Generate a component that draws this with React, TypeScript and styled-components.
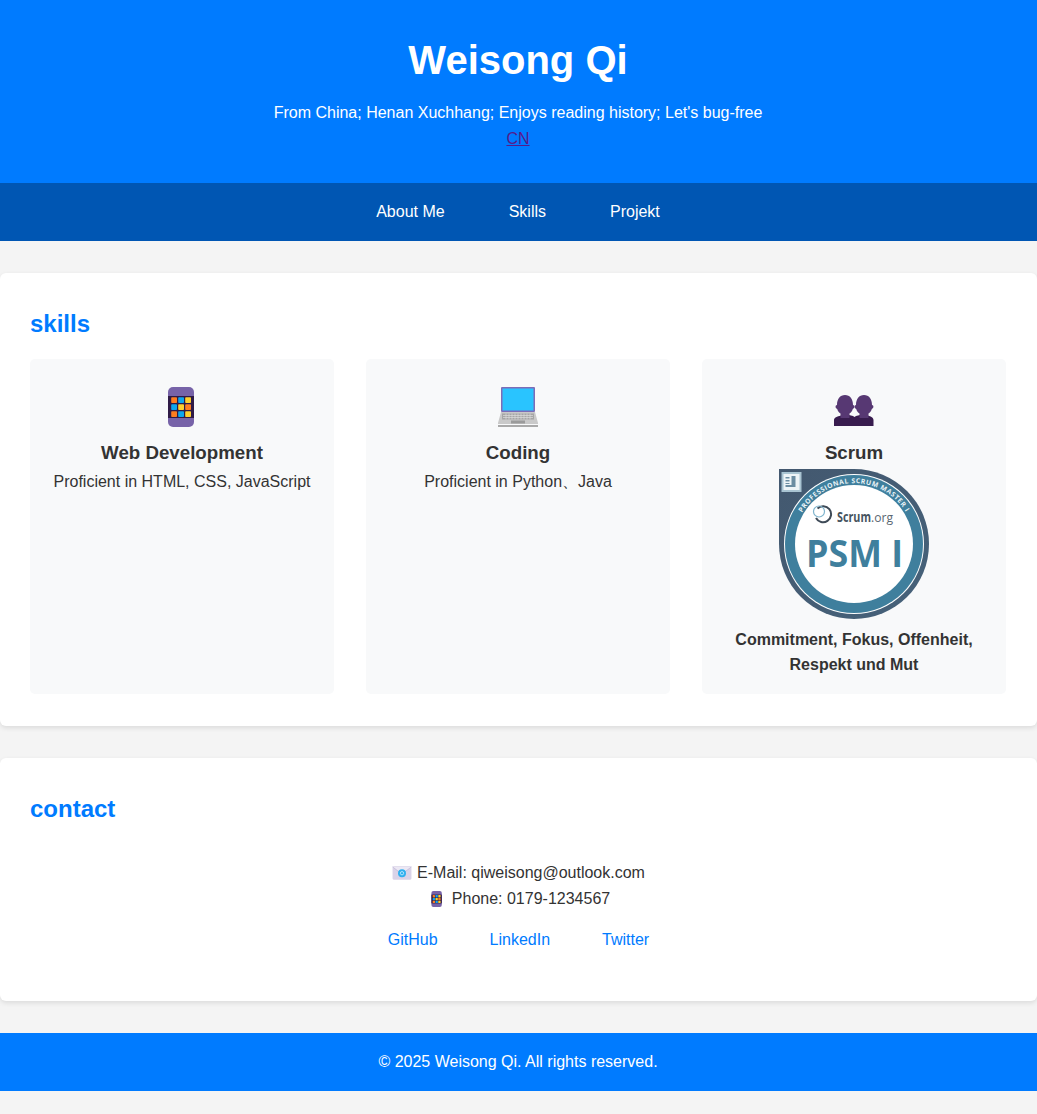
import React from "react";
import styled, { createGlobalStyle } from "styled-components";

const Global = createGlobalStyle`
  html, body { margin: 0; padding: 0; }
  body {
    background: #f4f4f4;
    color: #333;
    font-family: "Liberation Sans", Arial, sans-serif;
    font-size: 16px;
    line-height: 1.6;
  }
  * { box-sizing: border-box; }
`;

const Page = styled.div`
  min-height: 1114px;
`;
const Header = styled.header`
  background: #007bff;
  color: #fff;
  text-align: center;
  padding: 32px 33px 32px 32px;
`;
const Title = styled.h1`
  margin: 4px 0 16px;
  font-size: 40px;
  line-height: 48px;
  font-weight: 700;
`;
const Tagline = styled.p`
  margin: 0;
`;
const LangLink = styled.a`
  color: #551a8b;
  text-decoration: underline;
`;
const Nav = styled.nav`
  background: #0056b3;
  display: flex;
  justify-content: center;
  gap: 64px;
  padding: 16px 17px 16px 16px;
`;
const NavLink = styled.a`
  color: #fff;
  text-decoration: none;
`;
const Section = styled.section`
  background: #fff;
  margin: 32px 0;
  padding: 30px 30px 32px;
  border-radius: 6px;
  box-shadow: 0 2px 5px rgba(0, 0, 0, 0.1);
`;
const Heading = styled.h2`
  margin: 2px 0 16px;
  color: #007bff;
  font-size: 24px;
  line-height: 38px;
  font-weight: 700;
`;
const CardGrid = styled.div`
  display: grid;
  grid-template-columns: repeat(3, 304px);
  gap: 32px;
`;
const Card = styled.article`
  background: #f8f9fa;
  border-radius: 5px;
  padding: 28px 20px 17px;
  text-align: center;
  height: 335px;
  display: flex;
  flex-direction: column;
  align-items: center;
`;
const CardIcon = styled.svg`
  display: block;
  height: 40px;
  width: 40px;
  flex: none;
`;
const CardTitle = styled.h3`
  margin: 10px 0 0;
  font-size: 18.72px;
  line-height: 32px;
  font-weight: 700;
`;
const CardText = styled.p`
  margin: 0;
`;
const Badge = styled.svg`
  display: block;
  width: 150px;
  height: 150px;
  margin: 0 0 8px;
  flex: none;
`;
const Values = styled.p`
  margin: 0;
  font-weight: 700;
  line-height: 25px;
`;
const Contact = styled.div`
  display: flex;
  flex-direction: column;
  align-items: center;
  padding: 16px 0 17px;
`;
const ContactLine = styled.p`
  margin: 0;
  display: flex;
  align-items: center;
  height: 26px;
`;
const InlineIcon = styled.svg`
  width: 20px;
  height: 16px;
  margin-right: 5px;
  flex: none;
`;
const Socials = styled.div`
  display: flex;
  gap: 52px;
  margin-top: 15px;
`;
const SocialLink = styled.a`
  color: #007bff;
  text-decoration: none;
`;
const Footer = styled.footer`
  background: #007bff;
  color: #fff;
  text-align: center;
  padding: 16px 17px 16px 16px;
`;

const PhoneArt = () => (
  <>
    <rect x="6" y="0" width="26" height="40" rx="5" fill="#7763a8" />
    <rect x="6" y="9" width="26" height="22" fill="#2f1b46" />
    {[0, 1, 2].map((r) =>
      [0, 1, 2].map((c) => (
        <rect
          key={`${r}${c}`}
          x={9.2 + c * 7}
          y={10.2 + r * 7}
          width="5.8"
          height="5.8"
          rx="0.8"
          fill={
            [
              ["#ff7d1f", "#0da7ee", "#ffd02c"],
              ["#0da7ee", "#ffd02c", "#ff7d1f"],
              ["#ff7d1f", "#0da7ee", "#ffd02c"],
            ][r][c]
          }
        />
      ))
    )}
  </>
);

const LaptopArt = () => (
  <>
    <rect x="3" y="0" width="34" height="25" rx="1" fill="#7c6cb8" />
    <rect x="4.500" y="1.500" width="31" height="22" fill="#29c4ff" />
    <path d="M3 25h34l3 11v1H0v-1z" fill="#c9c9c9" />
    <rect x="4" y="26.500" width="32" height="6" fill="#a6a6a6" />
    <path
      d="M5 28.500h30M5 30.500h30M8 26.500v6M11 26.500v6M14 26.500v6M17 26.500v6M20 26.500v6M23 26.500v6M26 26.500v6M29 26.500v6M32 26.500v6"
      stroke="#dcdcdc"
      strokeWidth="0.7"
    />
    <rect x="13" y="33.500" width="14" height="3" fill="#9b9b9b" />
    <rect x="0" y="38" width="40" height="2" fill="#a9a9a9" />
  </>
);

const PeopleArt = () => (
  <>
    <path
      d="M0 39V33c0-2.500 3-3.500 7-4.500l4-1.500 8 2 1.500 1 1.500-1 8-2 4 1.500c3 1 5.500 2 5.500 4.500v6z"
      fill="#381c4e"
    />
    <path
      d="M3 18C3 12 6 8 11 8s8 4 8 10c1.800 0 2 3.200-.2 4-.6 2-1.800 3.500-3.300 4.500V31h-9v-4.500C5 25.500 3.800 24 3.200 22 1 21.200 1.200 18 3 18z"
      fill="#573873"
    />
    <path
      d="M22 18c0-6 3-10 8-10s8 4 8 10c1.800 0 2 3.200-.2 4-.6 2-1.800 3.500-3.300 4.500V31h-9v-4.500c-1.500-1-2.700-2.500-3.300-4.500-2.200-.8-2-4-.2-4z"
      fill="#573873"
    />
  </>
);

const EnvelopeArt = () => (
  <>
    <rect x="0.500" y="1" width="17" height="12" rx="1" fill="#d9d3e8" />
    <path d="M0.500 1.500 9 8l8.500-6.500" fill="#ece8f4" stroke="#bcb3d4" strokeWidth="0.6" />
    <circle cx="9" cy="7.200" r="3.600" fill="#2fb0ee" />
    <circle cx="9" cy="7.200" r="1.500" fill="none" stroke="#bfe9ff" strokeWidth="0.8" />
  </>
);

const PsmBadge = () => (
  <Badge viewBox="0 0 150 150" role="img" aria-label="PSM I">
    <defs>
      <linearGradient id="edge" x1="0" y1="0" x2="1" y2="1">
        <stop offset="0" stopColor="#43586f" />
        <stop offset="1" stopColor="#46627a" />
      </linearGradient>
      <path id="arc" d="M 23.100 43.800 A 60.500 60.500 0 0 1 129 47" />
    </defs>
    <path d="M0 0H75A75 75 0 1 1 0 75z" fill="url(#edge)" />
    <circle cx="75" cy="75" r="70" fill="#fff" />
    <circle cx="75" cy="75" r="69" fill="#3f7f9d" />
    <circle cx="75" cy="75" r="59" fill="#fff" />
    <rect x="2.500" y="3" width="20" height="20" fill="#a9c4d2" />
    <rect x="4.500" y="5" width="16" height="16" fill="#eef4f7" />
    <path d="M6.500 8h4v1.500h-4zM6.500 11h4v1.500h-4zM6.500 14h4v1h-4zM6.500 16h8v2h-8zM12.500 7h4v11h-4z" fill="#6c8da2" />
    <text fontFamily="'Open Sans', sans-serif" fontSize="6.800" fontWeight="700" fill="#eaf3f7">
      <textPath href="#arc" textLength="124" lengthAdjust="spacing">PROFESSIONAL SCRUM MASTER I</textPath>
    </text>
    <path d="M38.500 39.500A8 8 0 1 1 37 49" fill="none" stroke="#3e4a57" strokeWidth="2" />
    <circle cx="40" cy="42.500" r="5.500" fill="none" stroke="#7fb4cd" strokeWidth="1.200" />
    <text
      x="58"
      y="53"
      fontFamily="'Open Sans', sans-serif"
      fontSize="14"
      fontWeight="700"
      fill="#46545f"
      textLength="34"
      lengthAdjust="spacingAndGlyphs"
    >
      Scrum
    </text>
    <text
      x="92"
      y="53"
      fontFamily="'Open Sans', sans-serif"
      fontSize="13"
      fill="#5a6772"
      textLength="22"
      lengthAdjust="spacingAndGlyphs"
    >
      .org
    </text>
    <text
      x="27"
      y="98"
      fontFamily="'Open Sans', sans-serif"
      fontSize="38"
      fontWeight="700"
      fill="#3f7f9d"
      textLength="97"
      lengthAdjust="spacingAndGlyphs"
    >
      PSM I
    </text>
  </Badge>
);

export default function App() {
  return (
    <Page>
      <Global />
      <Header>
        <Title>Weisong Qi</Title>
        <Tagline>From China; Henan Xuchhang; Enjoys reading history; Let's bug-free</Tagline>
        <LangLink href="#cn">CN</LangLink>
      </Header>
      <Nav>
        <NavLink href="#about">About Me</NavLink>
        <NavLink href="#skills">Skills</NavLink>
        <NavLink href="#projekt">Projekt</NavLink>
      </Nav>
      <Section>
        <Heading>skills</Heading>
        <CardGrid>
          <Card>
            <CardIcon viewBox="0 0 40 40"><PhoneArt /></CardIcon>
            <CardTitle>Web Development</CardTitle>
            <CardText>Proficient in HTML, CSS, JavaScript</CardText>
          </Card>
          <Card>
            <CardIcon viewBox="0 0 40 40"><LaptopArt /></CardIcon>
            <CardTitle>Coding</CardTitle>
            <CardText>Proficient in Python、Java</CardText>
          </Card>
          <Card>
            <CardIcon viewBox="0 0 40 40"><PeopleArt /></CardIcon>
            <CardTitle>Scrum</CardTitle>
            <PsmBadge />
            <Values>Commitment, Fokus, Offenheit, Respekt und Mut</Values>
          </Card>
        </CardGrid>
      </Section>
      <Section>
        <Heading>contact</Heading>
        <Contact>
          <ContactLine>
            <InlineIcon viewBox="0 0 18 14" preserveAspectRatio="xMidYMid meet"><EnvelopeArt /></InlineIcon>
            E-Mail: qiweisong@outlook.com
          </ContactLine>
          <ContactLine>
            <InlineIcon viewBox="0 0 40 40"><PhoneArt /></InlineIcon>
            Phone: 0179-1234567
          </ContactLine>
          <Socials>
            <SocialLink href="#github">GitHub</SocialLink>
            <SocialLink href="#linkedin">LinkedIn</SocialLink>
            <SocialLink href="#twitter">Twitter</SocialLink>
          </Socials>
        </Contact>
      </Section>
      <Footer>© 2025 Weisong Qi. All rights reserved.</Footer>
    </Page>
  );
}
